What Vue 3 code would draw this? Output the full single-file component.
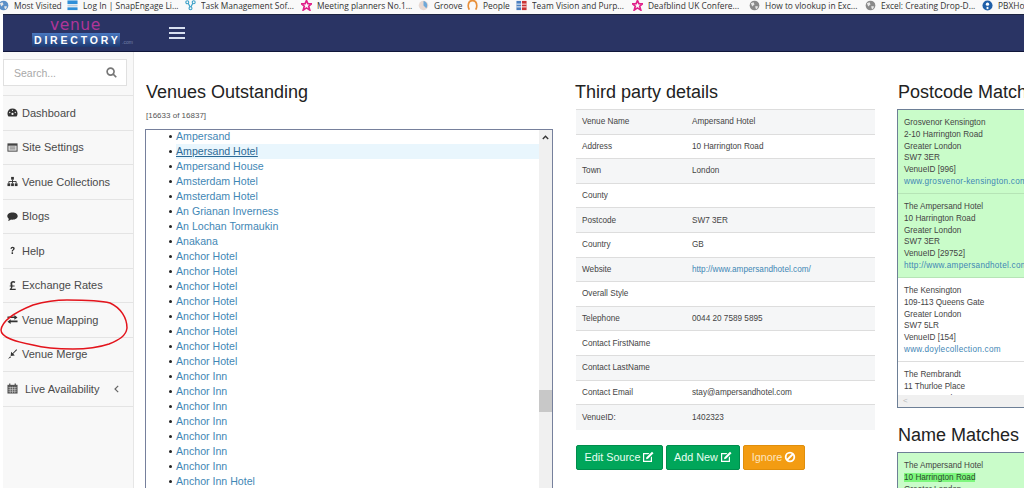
<script setup>
const bookmarks = [
  { t: 'Most Visited', w: 53, i: 'globe', c: '#5b8fc7' },
  { t: 'Log In | SnapEngage Li...', w: 102, i: 'snap', c: '#2f8fd8' },
  { t: 'Task Management Sof...', w: 100, i: 'task', c: '#3aa0c8' },
  { t: 'Meeting planners No.1...', w: 101, i: 'star', c: '#e0218a' },
  { t: 'Groove', w: 33, i: 'groove', c: '#9ab' },
  { t: 'People', w: 33, i: 'people', c: '#e8903a' },
  { t: 'Team Vision and Purp...', w: 100, i: 'team', c: '#c33' },
  { t: 'Deafblind UK Confere...', w: 101, i: 'star', c: '#e0218a' },
  { t: 'How to vlookup in Exc...', w: 100, i: 'globe', c: '#8a8a8a' },
  { t: 'Excel: Creating Drop-D...', w: 101, i: 'globe', c: '#8a8a8a' },
  { t: 'PBXHosted', w: 60, i: 'pbx', c: '#1f5fa8' }
]
const menu = [
  { t: 'Dashboard', i: 'dash' },
  { t: 'Site Settings', i: 'site' },
  { t: 'Venue Collections', i: 'tree' },
  { t: 'Blogs', i: 'chat' },
  { t: 'Help', i: 'help' },
  { t: 'Exchange Rates', i: 'pound' },
  { t: 'Venue Mapping', i: 'swap' },
  { t: 'Venue Merge', i: 'merge' },
  { t: 'Live Availability', i: 'cal', more: true }
]
const venues = [
  'Ampersand', 'Ampersand Hotel', 'Ampersand House', 'Amsterdam Hotel', 'Amsterdam Hotel',
  'An Grianan Inverness', 'An Lochan Tormaukin', 'Anakana', 'Anchor Hotel', 'Anchor Hotel',
  'Anchor Hotel', 'Anchor Hotel', 'Anchor Hotel', 'Anchor Hotel', 'Anchor Hotel', 'Anchor Hotel',
  'Anchor Inn', 'Anchor Inn', 'Anchor Inn', 'Anchor Inn', 'Anchor Inn', 'Anchor Inn', 'Anchor Inn',
  'Anchor Inn Hotel'
]
const details = [
  ['Venue Name', 'Ampersand Hotel'], ['Address', '10 Harrington Road'], ['Town', 'London'],
  ['County', ''], ['Postcode', 'SW7 3ER'], ['Country', 'GB'],
  ['Website', 'http://www.ampersandhotel.com/', true], ['Overall Style', ''],
  ['Telephone', '0044 20 7589 5895'], ['Contact FirstName', ''], ['Contact LastName', ''],
  ['Contact Email', 'stay@ampersandhotel.com'], ['VenueID:', '1402323']
]
const matches = [
  { l: ['Grosvenor Kensington', '2-10 Harrington Road', 'Greater London', 'SW7 3ER', 'VenueID [996]'], u: 'www.grosvenor-kensington.com', g: true },
  { l: ['The Ampersand Hotel', '10 Harrington Road', 'Greater London', 'SW7 3ER', 'VenueID [29752]'], u: 'http://www.ampersandhotel.com', g: true },
  { l: ['The Kensington', '109-113 Queens Gate', 'Greater London', 'SW7 5LR', 'VenueID [154]'], u: 'www.doylecollection.com', g: false },
  { l: ['The Rembrandt', '11 Thurloe Place', 'Greater London'], u: '', g: false }
]
</script>

<template>
  <div class="page">
    <div class="bookmarks">
      <div v-for="b in bookmarks" :key="b.t" class="bm">
        <svg class="bm-ico" viewBox="0 0 12 12">
          <polygon v-if="b.i === 'star'" points="6,0.5 7.5,4 11.5,4.2 8.4,6.8 9.6,11 6,8.6 2.4,11 3.6,6.8 0.5,4.2 4.5,4" fill="none" :stroke="b.c" stroke-width="1.8" />
          <g v-else-if="b.i === 'snap'"><rect x="0.5" y="0.5" width="11" height="4" :fill="b.c" /><rect x="0.5" y="5.5" width="11" height="1.5" fill="#bcd" /><rect x="0.5" y="8" width="11" height="3" :fill="b.c" /></g>
          <g v-else-if="b.i === 'task'" fill="none" :stroke="b.c" stroke-width="1.2"><circle cx="2.5" cy="2.5" r="1.6" /><circle cx="9.5" cy="2.5" r="1.6" /><circle cx="6" cy="9" r="1.6" /><path d="M3.5 3.6 5.5 7.5M8.5 3.6 6.5 7.5" /></g>
          <g v-else-if="b.i === 'groove'"><circle cx="6" cy="6" r="5.2" fill="#e9d9d2" /><path d="M6 1a5 5 0 0 1 3 8L6 6z" fill="#6fa8d8" /></g>
          <path v-else-if="b.i === 'people'" d="M2.5 10.5C1 8 1 4 3 1.5M9.5 10.5C11 8 11 4 9 1.5M3 1.5C5 .5 7 .5 9 1.5" fill="none" :stroke="b.c" stroke-width="2" />
          <g v-else-if="b.i === 'team'"><rect x="0.5" y="1" width="5" height="10" fill="#4a7fc0" /><rect x="6.5" y="1" width="5" height="10" :fill="b.c" /><path d="M0.5 4.5h11M0.5 7.5h11" stroke="#fff" /></g>
          <g v-else-if="b.i === 'pbx'"><circle cx="6" cy="6" r="5.5" :fill="b.c" /><circle cx="6" cy="4.5" r="1.8" fill="#fff" /><rect x="5" y="7.5" width="2" height="2.5" fill="#fff" /></g>
          <g v-else><circle cx="6" cy="6" r="5.3" :fill="b.c" /><path d="M2 3.5 5 2.5 6 5 3.5 7zM7 6.5l3 .5-1.5 3-1.5-1z" fill="#e8e8e8" /></g>
        </svg>
        <span class="bm-text" :style="{ width: b.w + 'px' }">{{ b.t }}</span>
      </div>
    </div>

    <header class="nav">
      <div class="logo">
        <div class="logo-venue">venue</div>
        <div class="logo-row"><span class="logo-dir">DIRECTORY</span><span class="logo-com">.com</span></div>
      </div>
      <div class="burger"><i></i><i></i><i></i></div>
    </header>

    <div class="body">
      <aside class="side">
        <div class="search-wrap">
          <div class="search">
            <span>Search...</span>
            <svg width="11" height="11" viewBox="0 0 12 12" fill="none" stroke="#777" stroke-width="1.8"><circle cx="5" cy="5" r="3.8" /><path d="M7.8 7.8 11.2 11.2" /></svg>
          </div>
        </div>
        <div v-for="m in menu" :key="m.t" class="item" :class="{ last: m.more }">
          <svg class="mi" :class="{ wide: m.more }" viewBox="0 0 12 12" fill="#333">
            <g v-if="m.i === 'dash'"><path d="M6 1.5a5.5 5.5 0 0 0-5.500 5.500c0 1.300.4 2.400 1.100 3.300h8.800c.7-.9 1.100-2 1.100-3.300A5.500 5.500 0 0 0 6 1.500z" /><circle cx="6" cy="7.500" r="1.200" fill="#f8f8f8" /><circle cx="3" cy="6" r=".7" fill="#f8f8f8" /><circle cx="9" cy="6" r=".7" fill="#f8f8f8" /><circle cx="6" cy="3.600" r=".7" fill="#f8f8f8" /></g>
            <g v-else-if="m.i === 'site'"><rect x=".5" y="1.500" width="11" height="9" fill="#444" /><rect x="1.500" y="4" width="9" height="5.500" fill="#ddd" /><path d="M3 5.500h6M3 7.500h6" stroke="#777" /></g>
            <g v-else-if="m.i === 'tree'"><rect x="4.500" y="1" width="3" height="3" /><rect x=".5" y="8" width="3" height="3" /><rect x="4.500" y="8" width="3" height="3" /><rect x="8.500" y="8" width="3" height="3" /><path d="M2 8V6h8v2M6 4v4" fill="none" stroke="#333" /></g>
            <path v-else-if="m.i === 'chat'" d="M6 1.500c3.200 0 5.700 1.700 5.700 4s-2.500 4-5.700 4c-.6 0-1.100 0-1.600-.2C3.500 10.300 2 10.800 1 11c.5-.7 1-1.600 1-2.500C1 7.700.3 6.700.3 5.500c0-2.300 2.500-4 5.700-4z" />
            <path v-else-if="m.i === 'help'" d="M3.800 4.200C3.900 2.800 4.800 2 6.200 2c1.300 0 2.200.8 2.200 1.900 0 1-.6 1.400-1.200 1.900-.5.400-.7.700-.7 1.400H5.100c0-1.100.3-1.600 1-2.100.5-.4.700-.6.700-1 0-.5-.3-.8-.8-.8-.6 0-.9.400-1 1zM5 8h1.600v1.700H5z" />
            <path v-else-if="m.i === 'pound'" d="M3 11V9.700c1-.5 1.500-1.300 1.400-2.500H3V6h1.200C3.900 4.800 3.800 4.300 3.800 3.800 3.800 2.200 5 1.200 6.700 1.200c1 0 1.800.3 2.400.8l-.8 1.300c-.5-.4-1-.6-1.500-.6-.7 0-1.100.4-1.100 1 0 .5.100.9.300 2.300h2.300v1.200H6c0 1-.4 1.700-1 2.300h4.500V11z" />
            <path v-else-if="m.i === 'swap'" d="M.5 2.800H8V1l3.500 2.700L8 6.200V4.400H.5zM11.500 7.200H4V5.800L.5 8.400 4 11V9h7.500z" />
            <path v-else-if="m.i === 'merge'" d="M11 1 6.800 5.200 8.500 7 4 7.500 4.500 3l1.600 1.600L10.200.3zM1 11l2.500-3 1 1z" />
            <g v-else-if="m.i === 'cal'"><rect x=".5" y="2" width="11" height="9.500" fill="#555" /><path d="M1.500 5h9M1.500 7h9M1.500 9h9M3.500 4v7M6 4v7M8.500 4v7" stroke="#ddd" stroke-width=".6" /><path d="M3 .5v2.500M9 .5v2.500" stroke="#555" stroke-width="1.400" /></g>
          </svg>
          <span class="mt">{{ m.t }}</span>
          <svg v-if="m.more" class="chev" width="5" height="8" viewBox="0 0 5 8" fill="none" stroke="#666" stroke-width="1.200"><path d="M4.200.8 1 4l3.200 3.200" /></svg>
        </div>
        <svg class="ring" width="131" height="54" viewBox="0 0 131 54" fill="none" stroke="#e3141c" stroke-width="1.500">
          <path d="M2 32C3 24 14 15 34 7 48 3 60 2 68 2 85 2 100 2 111 5 122 10 128 20 128 30 127 38 120 42 110 46 98 50 85 51 74 51 58 51 45 50 34 47 18 44 2 40 2 32z" />
        </svg>
      </aside>

      <main class="col-venues">
        <h2 class="h h-venues">Venues Outstanding</h2>
        <div class="count">[16633 of 16837]</div>
        <div class="listbox">
          <ul class="vlist">
            <li v-for="(v, i) in venues" :key="i" :class="{ hl: i === 1 }"><a>{{ v }}</a></li>
          </ul>
          <div class="scroll">
            <svg class="up" width="7" height="5" viewBox="0 0 7 5" fill="none" stroke="#333" stroke-width="1.300"><path d="M.8 4 3.500 1.200 6.200 4" /></svg>
            <div class="thumb"></div>
          </div>
        </div>
      </main>

      <section class="col-third">
        <h2 class="h h-third">Third party details</h2>
        <div class="table">
          <div v-for="(d, i) in details" :key="d[0]" class="tr" :class="{ odd: i % 2 === 0 }">
            <span class="td1">{{ d[0] }}</span><span class="td2" :class="{ link: d[2] }">{{ d[1] }}</span>
          </div>
        </div>
        <div class="btns">
          <div class="btn green w1">Edit Source
            <svg class="bi" viewBox="0 0 12 12"><path d="M1 2h6.500L6.300 3.200H2.200v6.600h6.600V6.500L10 5.300V11H1z" fill="#fff" /><path d="M10 .8 11.500 2.300 6 7.800 4 8.300 4.500 6.300z" fill="#fff" /></svg>
          </div>
          <div class="btn green w2">Add New
            <svg class="bi" viewBox="0 0 12 12"><path d="M1 2h6.500L6.300 3.200H2.200v6.600h6.600V6.500L10 5.300V11H1z" fill="#fff" /><path d="M10 .8 11.500 2.300 6 7.800 4 8.300 4.500 6.300z" fill="#fff" /></svg>
          </div>
          <div class="btn orange w3">Ignore
            <svg class="bi" viewBox="0 0 12 12" fill="none" stroke="#fff" stroke-width="1.800"><circle cx="6" cy="6" r="4.300" /><path d="M3 9 9 3" /></svg>
          </div>
        </div>
      </section>

      <section class="col-match">
        <h2 class="h h-match">Postcode Matches</h2>
        <div class="panel p1">
          <div class="pscroll">
            <div v-for="m in matches" :key="m.l[0]" class="card" :class="{ green: m.g }">
              <div v-for="l in m.l" :key="l">{{ l }}</div>
              <a v-if="m.u">{{ m.u }}</a>
            </div>
          </div>
          <div class="hbar"><span>&lt;</span></div>
        </div>
        <h2 class="h h-name">Name Matches</h2>
        <div class="panel p2">
          <div class="card green">
            <div>The Ampersand Hotel</div>
            <div><mark>10 Harrington Road</mark></div>
            <div>Greater London</div>
          </div>
        </div>
      </section>
    </div>
  </div>
</template>

<style>
html, body { margin: 0; background: #fff; overflow: hidden; }
</style>

<style scoped>
.page { width: 1024px; height: 488px; overflow: hidden; font-family: "Liberation Sans", Arial, sans-serif; color: #333; background: #fff; }

.bookmarks { height: 14px; box-sizing: border-box; padding-bottom: 3px; display: flex; align-items: center; background: #f9f9f9; white-space: nowrap; overflow: hidden; font-family: "Open Sans", "Noto Sans", sans-serif; font-size: 8.400px; color: #333; }
.bm { display: flex; align-items: center; flex: none; }
.bm-ico { width: 11px; height: 11px; flex: none; margin-right: 5px; }
.bm:first-child .bm-ico { margin-left: -2px; }
.bm-text { display: block; flex: none; overflow: hidden; }

.nav { height: 38px; margin-left: 3px; background: #2a3464; border-top: 1px solid #1c2340; border-bottom: 1px solid #10163a; box-sizing: border-box; display: flex; align-items: center; }
.logo { width: 166px; height: 36px; display: flex; flex-direction: column; align-items: flex-start; flex: none; }
.logo-venue { color: #b0359a; font-family: "DejaVu Sans", sans-serif; font-size: 15.500px; line-height: 15px; letter-spacing: .6px; margin: 3px 0 0 47px; }
.logo-row { display: flex; align-items: center; margin: 0 0 0 29px; }
.logo-dir { background: linear-gradient(#4a78c0, #1d3a72); color: #fff; font-weight: 700; font-size: 10.500px; line-height: 14px; letter-spacing: 2.800px; padding-left: 2px; width: 88px; box-sizing: border-box; white-space: nowrap; overflow: hidden; }
.logo-com { font-size: 5px; line-height: 6px; color: #7382a8; margin: 4px 0 0 2px; }
.burger { display: flex; flex-direction: column; gap: 3px; }
.burger i { display: block; width: 16px; height: 2px; background: #d8e0f0; }

.body { display: flex; height: 436px; padding-left: 3px; overflow: hidden; }
.side { width: 131px; flex: none; background: #f8f8f8; border-right: 1px solid #e6e6e6; position: relative; height: 436px; box-sizing: border-box; }
.search-wrap { height: 44px; box-sizing: border-box; padding: 7px 6px 0 0; border-bottom: 1px solid #e4e4e4; }
.search { height: 27px; box-sizing: border-box; border: 1px solid #e0e0e0; background: #fff; display: flex; align-items: center; justify-content: space-between; padding: 0 9px 0 10px; color: #a8a8a8; font-size: 10.500px; }
.item { height: 34.500px; box-sizing: border-box; border-bottom: 1px solid #e4e4e4; display: flex; align-items: center; font-size: 11px; color: #4a4a4a; padding-left: 4px; }
.mi { width: 11px; height: 11px; flex: none; margin-right: 4px; }
.mi.wide { margin-right: 7px; }
.chev { margin-left: 15px; }
.ring { position: absolute; left: -4px; top: 246px; pointer-events: none; }

.h { margin: 0; font-weight: 400; color: #222; font-size: 18px; line-height: 22px; white-space: nowrap; }
.h-venues { margin-left: 1px; }
.col-venues { width: 408px; margin-left: 11px; flex: none; padding-top: 29px; }
.count { font-size: 8px; color: #555; margin: 8px 0 0 1px; line-height: 10px; }
.listbox { margin-top: 8px; width: 408px; height: 400px; box-sizing: border-box; border: 1px solid #76809c; display: flex; overflow: hidden; }
.vlist { flex: 1; margin: -1px 0 0; padding: 0 0 0 30px; list-style: none; font-size: 10.600px; line-height: 15px; color: #222; }
.vlist li { height: 15px; white-space: nowrap; }
.vlist li::before { content: ""; display: inline-block; width: 3px; height: 3px; border-radius: 50%; background: #222; margin: 0 4px 1px -7px; vertical-align: middle; }
.vlist a { color: #3f87b5; }
.vlist li.hl { background: #e9f6fd; }
.vlist li.hl a { color: #2c6a96; text-decoration: underline; }
.scroll { width: 13px; flex: none; background: #f0f0f0; position: relative; }
.up { position: absolute; left: 3px; top: 5px; }
.thumb { position: absolute; left: 0; top: 260px; width: 13px; height: 22px; background: #c8c8c8; }

.col-third { width: 299px; margin-left: 23px; flex: none; padding-top: 29px; }
.h-third { margin-left: -1px; }
.table { margin-top: 6px; border-top: 1px solid #ddd; font-size: 8.200px; color: #444; }
.tr { height: 24.600px; box-sizing: border-box; border-bottom: 1px solid #ddd; display: flex; align-items: center; padding-left: 6px; }
.tr.odd { background: #f5f6f7; }
.tr:last-child { border-bottom: 0; }
.td1 { width: 110px; flex: none; }
.link { color: #3f87b5; }
.btns { display: flex; gap: 3px; margin-top: 15px; }
.btn { height: 25px; box-sizing: border-box; border-radius: 2px; color: #fff; font-size: 10.800px; display: flex; align-items: center; justify-content: center; gap: 2px; }
.green { background: #00a65a; border: 1px solid #008d4c; }
.orange { background: #f39c12; border: 1px solid #e08e0b; color: #fde5c0; }
.btn.green { color: #e8fff2; }
.w1 { width: 87px; }
.w2 { width: 74px; }
.w3 { width: 62px; }
.bi { width: 12px; height: 12px; }

.col-match { width: 200px; margin-left: 22px; flex: none; padding-top: 29px; }
.h-match { margin-left: 1px; }
.panel { width: 200px; box-sizing: border-box; border: 1px solid #6d7f96; overflow: hidden; font-size: 8.200px; line-height: 12px; color: #444; }
.p1 { height: 299px; margin-top: 6px; display: flex; flex-direction: column; }
.pscroll { flex: 1; overflow: hidden; }
.hbar { height: 12px; flex: none; background: #f0f0f0; color: #bbb; font-size: 8px; padding-left: 5px; line-height: 12px; }
.card { padding: 7px 6px 5px; border-bottom: 1px solid #ddd; white-space: nowrap; }
.card.green { background: #c9fcc9; border: 0; border-bottom: 1px solid #b6e4b6; }
.card div { height: 11.800px; }
.card a { display: block; height: 12px; color: #3f87b5; letter-spacing: .25px; }
.h-name { margin: 16px 0 0 1px; }
.p2 { height: 60px; margin-top: 6px; background: #c9fcc9; }
.p2 .card { border: 0; }
mark { background: #7df77d; color: #2a4a2a; }
</style>
